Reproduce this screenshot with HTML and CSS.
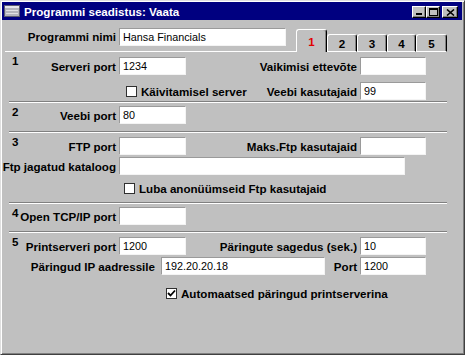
FILE: index.html
```html
<!DOCTYPE html>
<html lang="et">
<head>
<meta charset="utf-8">
<title>Programmi seadistus: Vaata</title>
<link rel="stylesheet" href="styles.css">
</head>
<body>
<div class="window">
  <div class="titlebar">
    <svg class="appicon" width="16" height="12" viewBox="0 0 16 12">
      <rect x="0.5" y="0.5" width="15" height="11" fill="#b4b4bc" stroke="#5a5a70"/>
      <rect x="1" y="1" width="14" height="2" fill="#e6e6ea"/>
      <line x1="2" y1="5.5" x2="14" y2="5.5" stroke="#e0e0e4"/>
      <line x1="2" y1="8.5" x2="14" y2="8.5" stroke="#e0e0e4"/>
    </svg>
    <span class="title">Programmi seadistus: Vaata</span>
    <div class="wbtns">
      <div class="wbtn min"><svg width="6" height="2" viewBox="0 0 6 2"><rect width="6" height="2" fill="#000"/></svg></div>
      <div class="wbtn max"><svg width="9" height="8" viewBox="0 0 9 8"><rect x="0.5" y="1" width="8" height="6.5" fill="none" stroke="#000"/><rect x="0" y="0" width="9" height="2" fill="#000"/></svg></div>
      <div class="wbtn close"><svg width="9" height="7" viewBox="0 0 9 7"><path d="M1 0.5 L8 6.5 M8 0.5 L1 6.5" stroke="#000" stroke-width="1.6"/></svg></div>
    </div>
  </div>

  <div class="header">
    <div class="hleft">
      <div class="lbl hl">Programmi nimi</div>
      <div class="field w167">Hansa Financials</div>
    </div>
    <div class="tabs">
      <div class="tab active">1</div>
      <div class="tab">2</div>
      <div class="tab">3</div>
      <div class="tab">4</div>
      <div class="tab">5</div>
    </div>
  </div>

  <div class="section s1">
    <div class="rows">
      <div class="row">
        <div class="lbl l">Serveri port</div>
        <div class="field w67">1234</div>
        <div class="lbl r">Vaikimisi ettevõte</div>
        <div class="field w66"></div>
      </div>
      <div class="row ind124">
        <div class="chk"></div>
        <div class="lbl">Käivitamisel server</div>
        <div class="lbl r">Veebi kasutajaid</div>
        <div class="field w66">99</div>
      </div>
    </div>
    <div class="num">1</div>
  </div>
  <div class="sep"></div>

  <div class="section s2">
    <div class="rows">
      <div class="row">
        <div class="lbl l">Veebi port</div>
        <div class="field w67">80</div>
      </div>
    </div>
    <div class="num">2</div>
  </div>
  <div class="sep"></div>

  <div class="section s3">
    <div class="rows">
      <div class="row">
        <div class="lbl l">FTP port</div>
        <div class="field w67"></div>
        <div class="lbl r">Maks.Ftp kasutajaid</div>
        <div class="field w66"></div>
      </div>
      <div class="row">
        <div class="lbl l">Ftp jagatud kataloog</div>
        <div class="field w286"></div>
      </div>
      <div class="row chkrow ind122">
        <div class="chk"></div>
        <div class="lbl">Luba anonüümseid Ftp kasutajaid</div>
      </div>
    </div>
    <div class="num">3</div>
  </div>
  <div class="sep"></div>

  <div class="section s4">
    <div class="rows">
      <div class="row">
        <div class="lbl l">Open TCP/IP port</div>
        <div class="field w67"></div>
      </div>
    </div>
    <div class="num">4</div>
  </div>
  <div class="sep"></div>

  <div class="section s5">
    <div class="rows">
      <div class="row">
        <div class="lbl l">Printserveri port</div>
        <div class="field w67">1200</div>
        <div class="lbl r">Päringute sagedus (sek.)</div>
        <div class="field w66">10</div>
      </div>
      <div class="row">
        <div class="lbl w153">Päringud IP aadressile</div>
        <div class="field w164">192.20.20.18</div>
        <div class="lbl r">Port</div>
        <div class="field w66">1200</div>
      </div>
      <div class="row chkrow ind164">
        <div class="chk on"><svg width="9" height="9" viewBox="0 0 9 9"><path d="M1 4 L3.5 6.5 L8 1.5" fill="none" stroke="#000" stroke-width="1.8"/></svg></div>
        <div class="lbl">Automaatsed päringud printserverina</div>
      </div>
    </div>
    <div class="num">5</div>
  </div>
</div>
</body>
</html>
```

FILE: styles.css
```css
* { box-sizing: border-box; }
html, body { margin: 0; padding: 0; }
body {
  width: 465px;
  height: 355px;
  overflow: hidden;
  background: #c0c0c0;
  font-family: "Liberation Sans", Arial, sans-serif;
  font-size: 11.6px;
  font-weight: bold;
  color: #000;
}
.window {
  width: 465px;
  height: 355px;
  background: #c0c0c0;
  border: 1px solid;
  border-color: #dfdfdf #404040 #404040 #dfdfdf;
  box-shadow: inset 1px 1px #fff, inset -1px -1px #808080;
  padding: 1px 2px 0 1px;
  display: flex;
  flex-direction: column;
}
.titlebar {
  height: 18px;
  flex: none;
  background: #000080;
  color: #fff;
  display: flex;
  align-items: center;
}
.appicon { margin-left: 2px; flex: none; }
.title { margin-left: 4px; line-height: 13px; white-space: nowrap; }
.wbtns {
  margin-left: auto;
  margin-right: 4px;
  display: flex;
  align-self: flex-start;
  margin-top: 4px;
}
.wbtn {
  width: 14px;
  height: 12px;
  background: #c0c0c0;
  border: 1px solid;
  border-color: #fff #000 #000 #fff;
  box-shadow: inset -1px -1px #808080;
  display: flex;
  align-items: center;
  justify-content: center;
}
.wbtn.min { align-items: flex-end; justify-content: flex-start; padding: 0 0 2px 3px; }
.wbtn.close { width: 16px; margin-left: 2px; }
.wbtn svg { display: block; }

.header { display: flex; height: 32px; flex: none; }
.hleft {
  margin-left: 3px;
  width: 291px;
  flex: none;
  border-bottom: 1px solid #fff;
  padding-top: 8px;
  display: flex;
  align-items: flex-start;
}
.lbl.hl { width: 111px; flex: none; margin-right: 3px; line-height: 18px; }
.tabs { display: flex; align-items: flex-end; }
.tab {
  height: 18px;
  width: 30px;
  border: 1px solid;
  border-color: #fff #000 #fff #fff;
  box-shadow: inset -1px 0 #808080;
  border-radius: 3px 3px 0 0;
  display: flex;
  justify-content: center;
  align-items: center;
  line-height: 13px;
}
.tab:nth-child(1) { width: 31px; }
.tab:nth-child(4) { width: 29px; }
.tab:nth-child(5) { width: 31px; }
.tab.active { height: 23px; border-bottom: none; color: #e00000; }

.section { display: grid; flex: none; }
.section > * { grid-area: 1 / 1; }
.num {
  margin: 2px 0 0 10px;
  align-self: start;
  justify-self: start;
  line-height: 13px;
}
.rows { display: flex; flex-direction: column; gap: 2px; }
.s1 .rows { padding: 5px 0 1px; gap: 7px; }
.s2 .rows { padding: 3px 0 7px; }
.s3 .rows { padding: 4px 0 5px; }
.s3 .chkrow { margin-top: 2px; }
.s4 .rows { padding: 3px 0 6px; }
.s5 .rows { padding: 4px 0 0; }
.s5 .chkrow { margin-top: 7px; }

.sep {
  flex: none;
  height: 2px;
  margin: 0 15px 0 7px;
  border-top: 1px solid #808080;
  border-bottom: 1px solid #fff;
}

.row { display: flex; height: 18px; padding-right: 36px; }
.ind122 { padding-left: 122px; }
.ind124 { padding-left: 124px; }
.ind164 { padding-left: 164px; }

.lbl {
  display: flex;
  justify-content: flex-end;
  white-space: nowrap;
  height: 18px;
  line-height: 20px;
}
.lbl.l { width: 114px; flex: none; margin-right: 3px; }
.lbl.r { margin-left: auto; margin-right: 3px; }
.lbl.w153 { width: 153px; flex: none; margin-right: 6px; }

.field {
  flex: none;
  height: 18px;
  background: #fff;
  border: 1px solid;
  border-color: #9a9a9a #f4f4f4 #f4f4f4 #9a9a9a;
  font-weight: normal;
  font-size: 10.8px;
  line-height: 17px;
  padding-left: 3px;
  white-space: nowrap;
  overflow: hidden;
}
.w66 { width: 66px; }
.w67 { width: 67px; }
.w164 { width: 164px; }
.w167 { width: 167px; }
.w286 { width: 286px; }

.chk {
  flex: none;
  width: 11px;
  height: 11px;
  align-self: center;
  margin-right: 4px;
  background: #fff;
  border: 1px solid #303030;
  display: flex;
  align-items: center;
  justify-content: center;
}
.chk svg { display: block; }
```
